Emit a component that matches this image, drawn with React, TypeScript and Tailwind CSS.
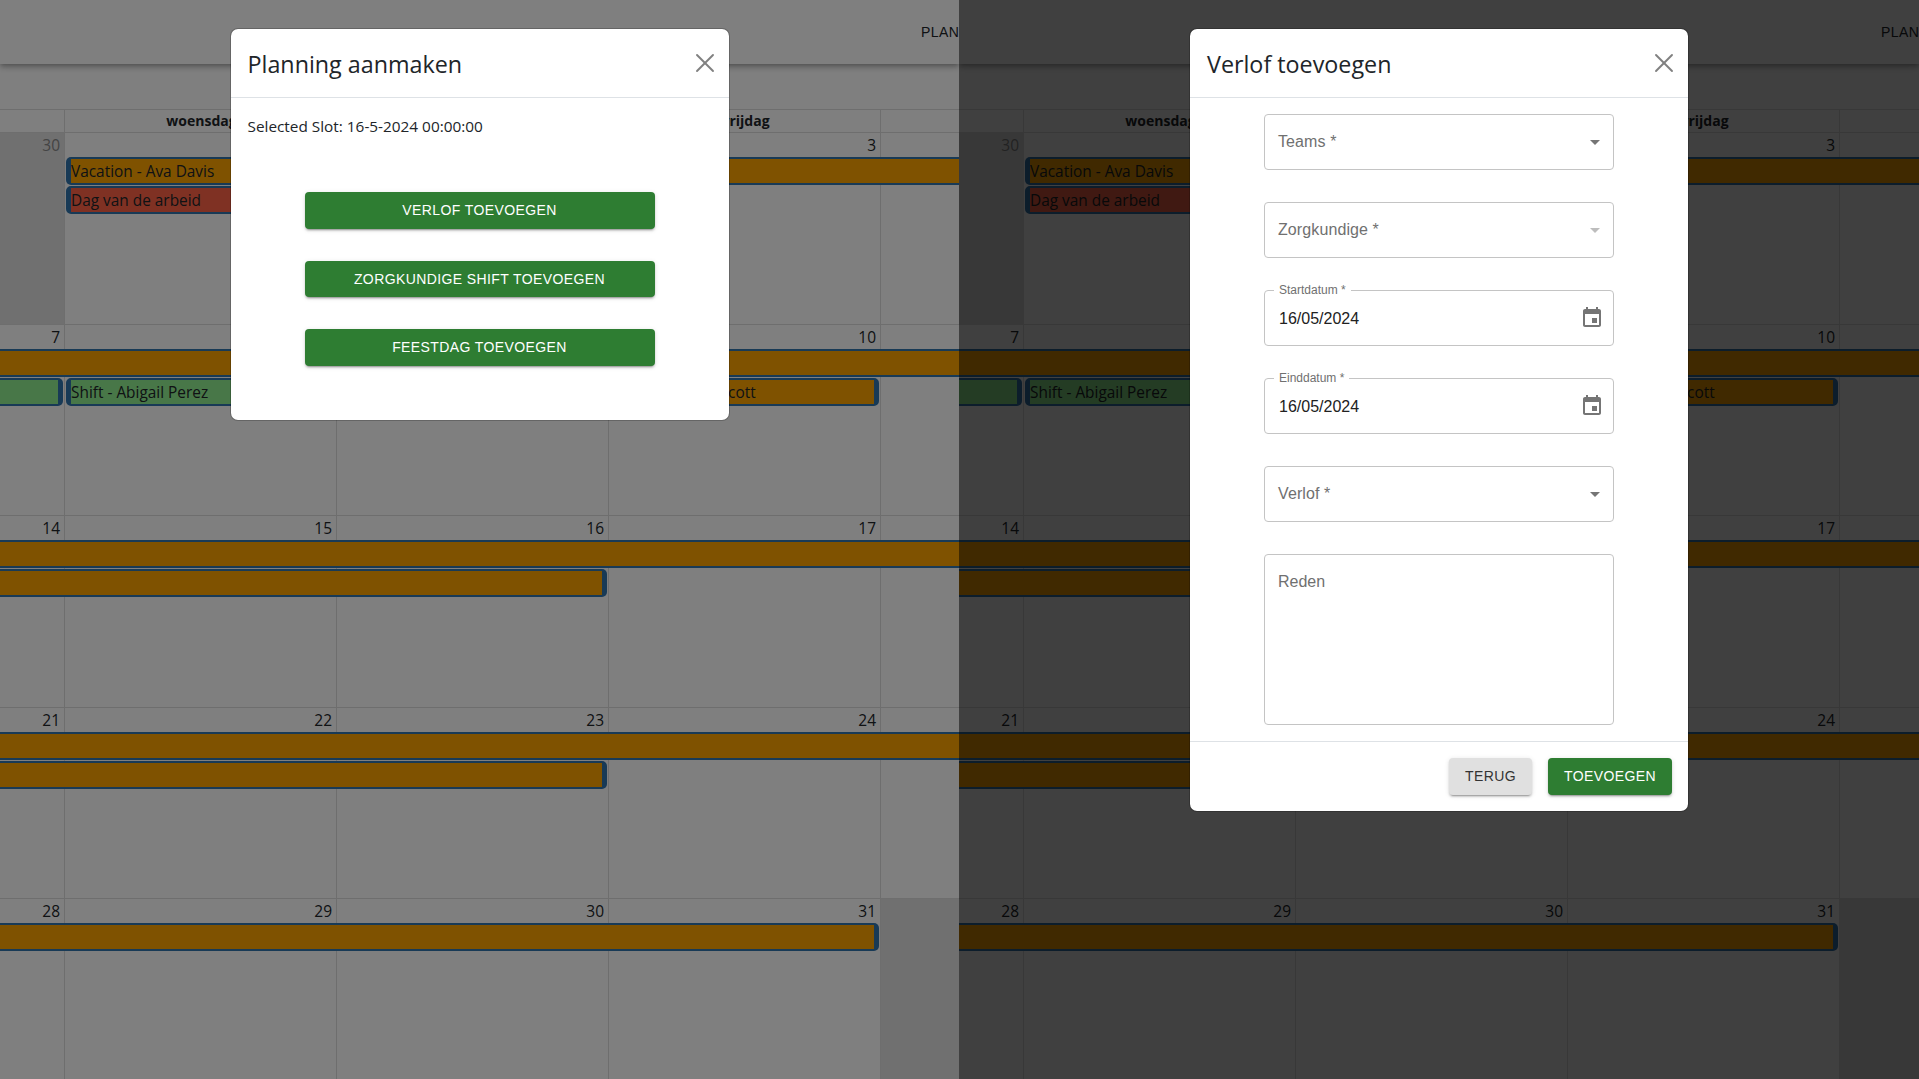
import React from 'react';
import { X } from 'lucide-react';

const uiFont = "font-['Open_Sans',sans-serif]";
const muiFont = "font-['Liberation_Sans',Arial,sans-serif]";

type CalEvent = {
  label?: string;
  place: string;
  color: string;
  openLeft?: boolean;
  openRight?: boolean;
};

const orange = 'bg-[#ffa500]';
const weeks: { dates: string[]; off: number[]; events: CalEvent[] }[] = [
  {
    dates: ['30', '1', '2', '3', '4'],
    off: [0],
    events: [
      { label: 'Vacation - Ava Davis', place: 'col-start-2 col-span-4 row-start-1', color: orange, openRight: true },
      { label: 'Dag van de arbeid', place: 'col-start-2 col-span-1 row-start-2', color: 'bg-[#ff6347]' },
    ],
  },
  {
    dates: ['7', '8', '9', '10', '11'],
    off: [],
    events: [
      { place: 'col-start-1 col-span-5 row-start-1', color: orange, openLeft: true, openRight: true },
      { place: 'col-start-1 col-span-1 row-start-2', color: 'bg-[#90ee90]', openLeft: true },
      { label: 'Shift - Abigail Perez', place: 'col-start-2 col-span-1 row-start-2', color: 'bg-[#90ee90]' },
      { label: 'Vacation - Ava Scott', place: 'col-start-4 col-span-1 row-start-2', color: orange },
    ],
  },
  {
    dates: ['14', '15', '16', '17', '18'],
    off: [],
    events: [
      { place: 'col-start-1 col-span-5 row-start-1', color: orange, openLeft: true, openRight: true },
      { place: 'col-start-1 col-span-3 row-start-2', color: orange, openLeft: true },
    ],
  },
  {
    dates: ['21', '22', '23', '24', '25'],
    off: [],
    events: [
      { place: 'col-start-1 col-span-5 row-start-1', color: orange, openLeft: true, openRight: true },
      { place: 'col-start-1 col-span-3 row-start-2', color: orange, openLeft: true },
    ],
  },
  {
    dates: ['28', '29', '30', '31', '1'],
    off: [4],
    events: [{ place: 'col-start-1 col-span-4 row-start-1', color: orange, openLeft: true }],
  },
];

const Event = ({ event }: { event: CalEvent }) => (
  <div
    className={`h-7 overflow-hidden whitespace-nowrap border-y-2 border-[#3174ad] text-[15.4px] leading-[26px] text-[#212529] ${event.place} ${event.color} ${
      event.openLeft ? '' : 'ml-0.5 rounded-l-[5px] border-l-[5px]'
    } ${event.openRight ? '' : 'mr-px rounded-r-[5px] border-r-[5px]'}`}
  >
    {event.label}
  </div>
);

const Week = ({ week, last }: { week: (typeof weeks)[number]; last: boolean }) => (
  <div className={`relative ${last ? 'flex-1' : 'h-[191.5px] border-b border-[#dddddd]'}`}>
    <div className="absolute inset-0 grid grid-cols-[64px_272px_272px_272px_272px]">
      {week.dates.map((_, i) => (
        <div key={i} className={`${i > 0 ? 'border-l border-[#dddddd]' : ''} ${week.off.includes(i) ? 'bg-[#e0e0e0]' : ''}`} />
      ))}
    </div>
    <div className="relative grid grid-cols-[64px_272px_272px_272px_272px]">
      {week.dates.map((date, i) => (
        <div key={i} className="h-6 pr-1 text-right text-[15.5px] leading-6">
          <span className={week.off.includes(i) ? 'text-[#888888]' : 'text-[#212529]'}>{date}</span>
        </div>
      ))}
    </div>
    <div className="relative grid grid-cols-[64px_272px_272px_272px_272px] gap-y-px">
      {week.events.map((event, i) => (
        <Event key={i} event={event} />
      ))}
    </div>
  </div>
);

const Calendar = () => (
  <div className={`flex h-full flex-col bg-white ${uiFont}`}>
    <div className="relative z-10 flex h-16 shrink-0 items-center justify-end bg-white shadow-[0_2px_4px_-1px_rgba(0,0,0,0.2),0_4px_5px_0_rgba(0,0,0,0.14),0_1px_10px_0_rgba(0,0,0,0.12)]">
      <span className={`w-[38px] overflow-hidden text-sm tracking-[0.4px] text-[#212529] ${muiFont}`}>PLANNING</span>
    </div>
    <div className="h-[45px] shrink-0" />
    <div className="grid h-[24px] shrink-0 grid-cols-[64px_272px_272px_272px_272px] border-y border-[#dddddd] text-[14px] font-bold leading-[22px] text-[#212529]">
      <div />
      {['woensdag', 'donderdag', 'vrijdag', 'zaterdag'].map((day) => (
        <div key={day} className="border-l border-[#dddddd] pl-0.5 text-center">
          {day}
        </div>
      ))}
    </div>
    {weeks.map((week, i) => (
      <Week key={i} week={week} last={i === weeks.length - 1} />
    ))}
  </div>
);

const GreenButton = ({ children, className = '' }: { children: React.ReactNode; className?: string }) => (
  <button
    className={`flex items-center justify-center rounded bg-[#2e7d32] pb-px text-sm font-medium uppercase tracking-[0.4px] text-white shadow-[0_3px_1px_-2px_rgba(0,0,0,0.2),0_2px_2px_0_rgba(0,0,0,0.14),0_1px_5px_0_rgba(0,0,0,0.12)] ${muiFont} ${className}`}
  >
    {children}
  </button>
);

const ModalHeader = ({ title }: { title: string }) => (
  <div className="flex h-[69px] shrink-0 items-center justify-between border-b border-[#dee2e6] pl-[17px] pr-2">
    <h5 className={`mt-[3px] text-[23.3px] font-normal text-[#212529] ${uiFont}`}>{title}</h5>
    <X size={32} strokeWidth={1.4} className="text-[#808080]" />
  </div>
);

const Modal = ({ children }: { children: React.ReactNode }) => (
  <div className="flex w-[500px] flex-col self-start rounded-lg border border-black/20 bg-white bg-clip-padding">{children}</div>
);

const ChooseModal = () => (
  <Modal>
    <ModalHeader title="Planning aanmaken" />
    <div className="flex h-[322px] flex-col pl-[17px] pr-4 pt-[18px]">
      <p className={`text-[15.35px] leading-[21px] text-[#212529] ${uiFont}`}>Selected Slot: 16-5-2024 00:00:00</p>
      <div className="-ml-px mt-[55px] flex flex-col items-center gap-8">
        <GreenButton className="h-[37px] w-[350px]">Verlof toevoegen</GreenButton>
        <GreenButton className="h-9 w-[350px]">Zorgkundige shift toevoegen</GreenButton>
        <GreenButton className="h-[37px] w-[350px]">Feestdag toevoegen</GreenButton>
      </div>
    </div>
  </Modal>
);

const DropdownIcon = ({ muted }: { muted?: boolean }) => (
  <svg width="24" height="24" viewBox="0 0 24 24" className={muted ? 'fill-[#bdbdbd]' : 'fill-[#757575]'}>
    <path d="M7 10l5 5 5-5z" />
  </svg>
);

const EventIcon = () => (
  <svg width="24" height="24" viewBox="0 0 24 24" className="fill-[#757575]">
    <path d="M17 12h-5v5h5v-5zM16 1v2H8V1H6v2H5c-1.11 0-1.99.9-1.99 2L3 19c0 1.1.89 2 2 2h14c1.1 0 2-.9 2-2V5c0-1.1-.9-2-2-2h-1V1h-2zm3 18H5V8h14v11z" />
  </svg>
);

const SelectField = ({ label, muted }: { label: string; muted?: boolean }) => (
  <div className="flex h-14 items-center justify-between rounded border border-[#c4c4c4] pl-[13px] pr-1.5">
    <span className="-mt-px text-base tracking-[0.1px] text-[#707070]">{label}</span>
    <DropdownIcon muted={muted} />
  </div>
);

const DateField = ({ label, value }: { label: string; value: string }) => (
  <div className="relative flex h-14 items-center justify-between rounded border border-[#c4c4c4] pl-[14px] pr-[9px]">
    <span className="absolute -top-[9px] left-[9px] bg-white px-[5px] text-xs leading-4 text-[#707070]">{label}</span>
    <span className="mt-0.5 text-base text-[#212121]">{value}</span>
    <EventIcon />
  </div>
);

const LeaveModal = () => (
  <Modal>
    <ModalHeader title="Verlof toevoegen" />
    <div className={`flex flex-col items-center border-b border-[#dee2e6] pb-4 pt-4 ${muiFont}`}>
      <div className="flex w-[350px] flex-col gap-8">
        <SelectField label="Teams *" />
        <SelectField label="Zorgkundige *" muted />
        <DateField label="Startdatum *" value="16/05/2024" />
        <DateField label="Einddatum *" value="16/05/2024" />
        <SelectField label="Verlof *" />
        <div className="h-[171px] rounded border border-[#c4c4c4] pl-[13px] pt-[15px] text-base leading-6 text-[#707070]">Reden</div>
      </div>
    </div>
    <div className="flex justify-end gap-4 p-4">
      <button className={`flex h-[37px] w-[83px] items-center justify-center rounded bg-[#e0e0e0] pb-px text-sm font-medium tracking-[0.4px] text-[#333333] shadow-[0_3px_1px_-2px_rgba(0,0,0,0.2),0_2px_2px_0_rgba(0,0,0,0.14),0_1px_5px_0_rgba(0,0,0,0.12)] ${muiFont}`}>
        TERUG
      </button>
      <GreenButton className="h-[37px] w-[124px]">Toevoegen</GreenButton>
    </div>
  </Modal>
);

const Pane = ({ width, overlay, children }: { width: string; overlay: string; children: React.ReactNode }) => (
  <div className={`relative h-full shrink-0 overflow-hidden ${width}`}>
    <Calendar />
    <div className={`absolute inset-0 z-20 flex justify-center pt-7 ${overlay}`}>{children}</div>
  </div>
);

export default function App() {
  return (
    <div className="flex h-[1079px] w-[1919px] overflow-hidden">
      <Pane width="w-[959px]" overlay="bg-black/50">
        <ChooseModal />
      </Pane>
      <Pane width="w-[960px]" overlay="bg-black/75">
        <LeaveModal />
      </Pane>
    </div>
  );
}
